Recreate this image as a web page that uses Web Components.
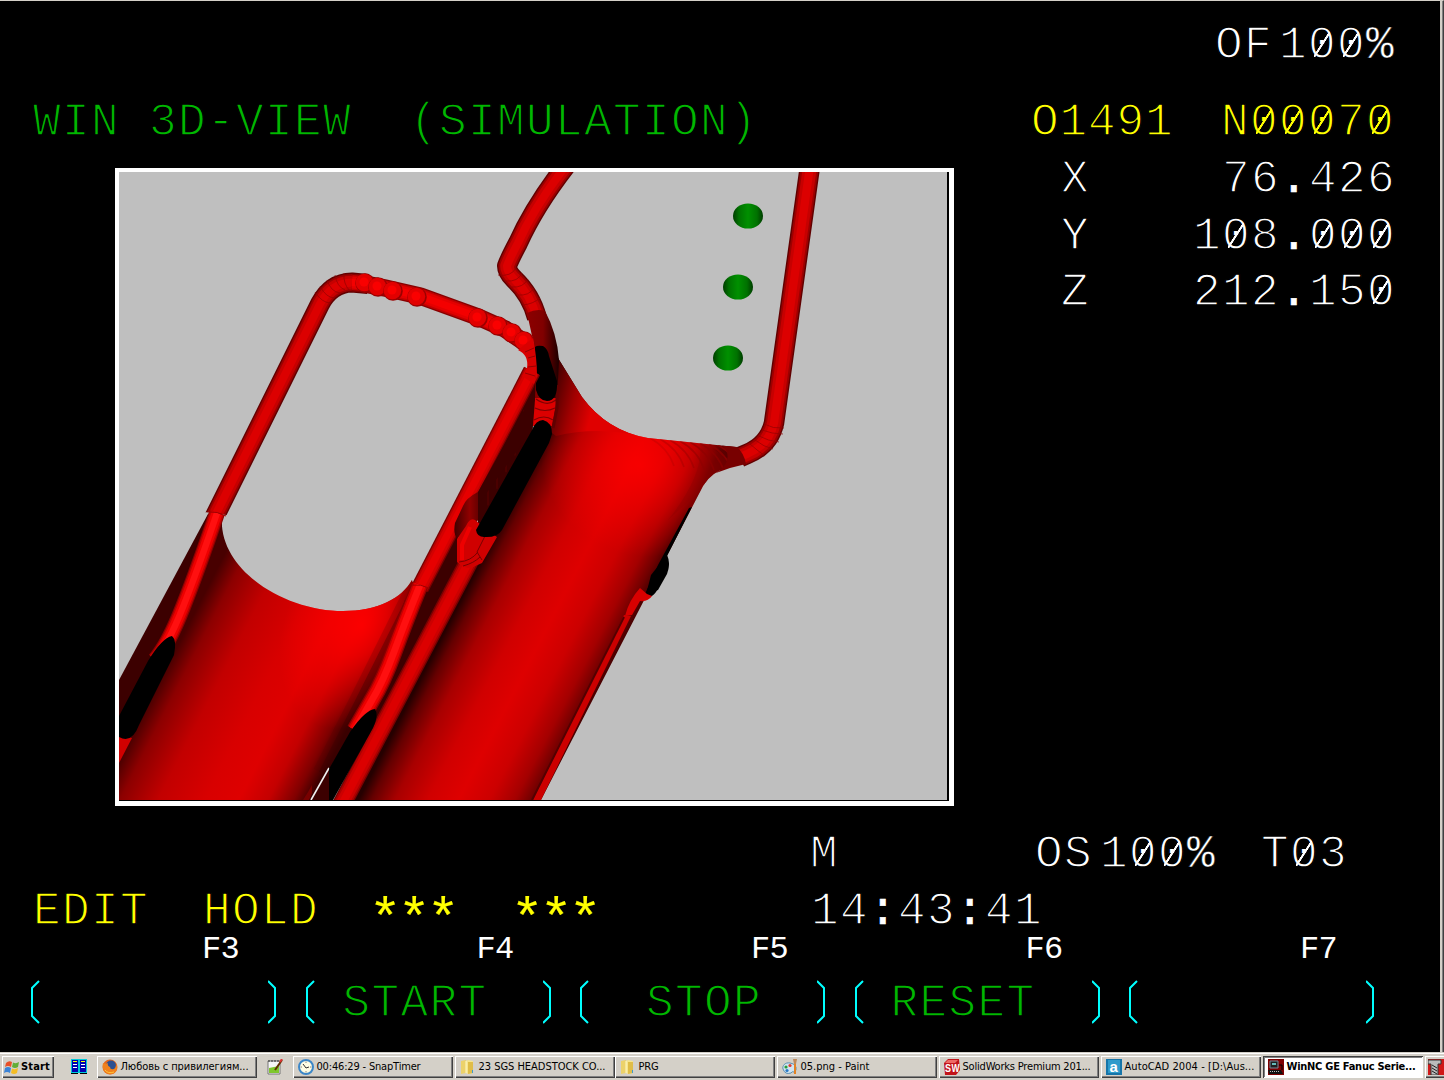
<!DOCTYPE html>
<html lang="en">
<head>
<meta charset="utf-8">
<title>WinNC GE Fanuc Series</title>
<style>
html,body{margin:0;width:1444px;height:1080px;overflow:hidden;background:#000}
</style>
</head>
<body>
<nc-desktop></nc-desktop>
<script>
const define=(name,html,setup)=>customElements.define(name,class extends HTMLElement{
  constructor(){super();this.attachShadow({mode:'open'});}
  connectedCallback(){
    this.shadowRoot.innerHTML=typeof html==='function'?html(this):html;
    if(setup)setup(this);
  }
});

/* One run of phosphor text on the 29px character grid; zeros carry a slash. */
define('crt-text',e=>`<style>
:host{display:block;flex:none;white-space:pre;font:46px/56px "Liberation Mono",monospace;letter-spacing:1.4px;color:#fff;-webkit-text-stroke:1.4px #000}
:host([c=g]){color:#00b800}:host([c=y]){color:#ff0}
:host([star]){transform:translate(-2px,9px);-webkit-text-stroke:.2px #ff0;font-size:54px;letter-spacing:-3.4px}
.z{position:relative}
.z::after{content:"";position:absolute;left:6px;top:12px;width:16px;height:25px;background:linear-gradient(to bottom right,transparent calc(50% - 1.3px),currentColor calc(50% - .8px),currentColor calc(50% + .8px),transparent calc(50% + 1.3px))}
.p{-webkit-text-stroke-width:.5px}
.d{-webkit-text-stroke:.6px currentColor}
</style>${(e.getAttribute('text')||'').replace(/0/g,'<span class="z">0</span>').replace('%','<span class="p">%</span>').replace(/[.:]/g,'<span class="d">$&</span>')}<slot></slot>`);

define('crt-row',`<style>:host{display:flex;height:56px;align-items:flex-start;box-sizing:border-box}</style><slot></slot>`);

/* Coordinate readout: axis name at left, value flush right. */
define('axis-row',e=>`<style>:host{display:flex;justify-content:space-between;height:56.5px;padding:0 47px 0 30px}</style>
<crt-text text="${e.getAttribute('axis')}"></crt-text><crt-text text="${e.getAttribute('value')}"></crt-text>`);

/* Soft key with its function number above and cyan parentheses around. */
define('soft-key',e=>`<style>
:host{display:flex;flex-direction:column;width:246px;flex:none}
.f{height:32px;box-sizing:border-box;padding:1px 0 0 171px;font:32px/32px "Liberation Mono",monospace;color:#fff;letter-spacing:-.6px}
.b{display:flex;align-items:flex-start;height:56px;padding-top:11px}
svg{flex:none;width:9px;height:44px;margin-top:4px}
path{fill:none;stroke:#0ff;stroke-width:2}
.m{flex:1;display:flex;padding-left:${e.getAttribute('pad')||0}px}
</style><div class="f">${e.getAttribute('key')}</div>
<div class="b"><svg viewBox="0 0 9 44"><path d="M8 1L1 8V36L8 43"/></svg><div class="m"><crt-text c="g"><slot></slot></crt-text></div><svg viewBox="0 0 9 44"><path d="M0 1L7 8V36L0 43"/></svg></div>`);

const tube=(d,w,c=['#600000','#9c0000','#c60000','#dc0000'],cap='butt')=>
  c.map((k,i)=>`<path d="${d}" fill="none" stroke="${k}" stroke-width="${(w*[1,.86,.68,.4][i]).toFixed(1)}" stroke-linejoin="round" stroke-linecap="${cap}"/>`).join('');
const bright=['#8a0000','#c40000','#ee0000','#ff1010'];
const rings=(list)=>list.map(([x1,y1,cx,cy,x2,y2])=>`<path d="M${x1} ${y1}Q${cx} ${cy} ${x2} ${y2}" fill="none" stroke="#900000" stroke-width=".7"/>`).join('');

define('machined-part',()=>`<style>:host{display:block;width:828px;height:628px;background:#bfbfbf}svg{display:block}</style>
<svg width="828" height="628" viewBox="119 172 828 628">
<defs>
<linearGradient id="r" gradientUnits="userSpaceOnUse" x1="455" y1="612" x2="599" y2="686"><stop offset="0" stop-color="#260000"/><stop offset=".07" stop-color="#640000"/><stop offset=".2" stop-color="#a80000"/><stop offset=".38" stop-color="#d00000"/><stop offset=".55" stop-color="#de0000"/><stop offset=".72" stop-color="#cc0000"/><stop offset=".86" stop-color="#a40000"/><stop offset=".95" stop-color="#700000"/><stop offset="1" stop-color="#4a0000"/></linearGradient>
<linearGradient id="l" gradientUnits="userSpaceOnUse" x1="155" y1="690" x2="323" y2="776"><stop offset="0" stop-color="#480000"/><stop offset=".1" stop-color="#8c0000"/><stop offset=".28" stop-color="#c20000"/><stop offset=".5" stop-color="#d80000"/><stop offset=".66" stop-color="#de0000"/><stop offset=".8" stop-color="#c40000"/><stop offset=".92" stop-color="#800000"/><stop offset="1" stop-color="#360000"/></linearGradient>
<radialGradient id="h1" gradientUnits="userSpaceOnUse" cx="0" cy="0" r="1" gradientTransform="translate(640 465) rotate(22) scale(100 90)"><stop offset="0" stop-color="#f00" stop-opacity=".8"/><stop offset="1" stop-color="#f00" stop-opacity="0"/></radialGradient>
<radialGradient id="h2" gradientUnits="userSpaceOnUse" cx="0" cy="0" r="1" gradientTransform="translate(362 625) rotate(-64) scale(110 75)"><stop offset="0" stop-color="#f00" stop-opacity=".95"/><stop offset=".3" stop-color="#f00" stop-opacity=".75"/><stop offset="1" stop-color="#f00" stop-opacity="0"/></radialGradient>
<linearGradient id="hk" gradientUnits="userSpaceOnUse" x1="552" y1="400" x2="592" y2="410"><stop offset="0" stop-color="#500000"/><stop offset=".5" stop-color="#a00000"/><stop offset="1" stop-color="#e00000"/></linearGradient>
<linearGradient id="w"><stop offset="0" stop-color="#8c0000"/><stop offset=".5" stop-color="#800000"/><stop offset="1" stop-color="#1c0000"/></linearGradient>
<linearGradient id="g"><stop offset="0" stop-color="#003c00"/><stop offset=".2" stop-color="#007200"/><stop offset=".5" stop-color="#009000"/><stop offset=".8" stop-color="#007200"/><stop offset="1" stop-color="#003c00"/></linearGradient>
<linearGradient id="n"><stop offset="0" stop-color="#400000"/><stop offset=".65" stop-color="#900000"/><stop offset="1" stop-color="#680000"/></linearGradient>
<clipPath id="cl"><path d="M222 515C217 570 285 611 343 611C378 611 402 598 412 580L420 620L318 800H119V740L200 560Z"/></clipPath>
<clipPath id="cr"><path d="M558 358L582 397Q607 431 648 438L736 447Q744 452 746 463L730 467Q712 471 703 486L541 800H340L480 560L545 440Z"/></clipPath>
<clipPath id="ct"><path d="M119 172H947V519L229 516Q218 511 200 512.500L119 512Z"/></clipPath>
</defs>
<path d="M208 514L119 680V745H170L222 580V510Z" fill="#3c0000"/>
<g clip-path="url(#cl)"><path d="M119 500H430V800H119Z" fill="url(#l)"/><path d="M220 520H440V800H220Z" fill="url(#h2)"/><path d="M424 585Q394 645 364 705L328 776" fill="none" stroke="#300000" stroke-width="20" opacity=".35"/><path d="M424 585Q394 645 364 705L328 776" fill="none" stroke="#500000" stroke-width="32" opacity=".22"/></g>
<path d="M458 535V568L400 680L380 725L360 760L362 720L405 600L440 545Z" fill="#3c0000"/>
<g clip-path="url(#cr)"><path d="M330 340H760V800H330Z" fill="url(#r)"/><path d="M530 350H760V580H530Z" fill="url(#h1)"/><path d="M558 352L582 394Q607 431 648 438Q600 425 556 436L548 430Z" fill="url(#hk)"/>
<path d="M700 444Q726 453 736 468L690 500L668 520Q704 475 700 444Z" fill="#8c0000" opacity=".35"/>
${[650,660,670,680,690,700,709,718].map((x,i)=>`<path d="M${x} ${438+i}Q${x+18} ${448+i} ${x+24} ${466+i}" stroke="#8c0000" fill="none" stroke-width="1.6" opacity="${.2+i*.1}"/>`).join('')}
<path d="M722 445L737 447L746 463L728 468Q735 458 722 445Z" fill="#800000"/></g>
<path d="M692 507L667 556Q669 562 668 569L656 592Q650 600 645 594L658 565L689 508Z" fill="#000"/>
<path d="M667 555Q671 563 667 574L658 590L646 595L651 575Z" fill="#000"/>
<path d="M640 588L647 594L652 596Q648 602 640 601L632 615L625 616Q629 600 640 588Z" fill="#d80000"/>
<path d="M624 615L631 616L541 800H533Z" fill="#cc0000"/><path d="M624 617L532 800" stroke="#540000" stroke-width="2" fill="none"/>
${tube('M476 548L341 806',19,['#780000','#ac0000','#cc0000','#dc0000'])}
${tube('M572 158Q536 203 518 243Q509 260 507 266Q507 272 514 279Q531 295 537 318',20)}
${rings([[498,275,511,277,516,268],[506,281,518,282,522,273],[512,287,523,288,528,279],[518,295,529,296,534,288],[523,305,533,304,540,298]])}
${tube('M810 166L774 423Q769 445 747 454L740 457',20.5,undefined)}
${rings([[764,424,773,429,784,428],[762,430,772,434,783,434],[759,436,768,441,779,442],[755,440,764,447,773,449],[750,444,758,451,765,456]])}
<path d="M724 446L737 447Q744 453 746 464L730 468L716 473Q734 462 724 446Z" fill="#780000"/>
<path d="M527 313Q537 308 545 311Q557 333 559 360L557 400L534 402V345Z" fill="url(#w)"/>
<path d="M534 398L557 398L552 426H531Z" fill="#dc0000"/><path d="M536 399Q547 407 556 400M535 408Q545 413 555 408M534 420Q544 414 553 420" fill="none" stroke="#800000" stroke-width="1.2"/><path d="M557 385V408L553 428" fill="none" stroke="#600000" stroke-width="3"/>
<path d="M535 347Q537 345 543 346Q548 349 549 356L557 381Q558 401 547 401Q539 401 536 390Z"/>
<path d="M536 365L478 490V531L532 438L535 400Z" fill="#3c0000"/>
${[488,497,506,515,524].map(x=>`<path d="M${x} ${482-(x-485)*1.85}V${511-(x-485)*1.85}" stroke="#580000" stroke-width="1"/>`).join('')}
<g clip-path="url(#ct)">${tube('M211 524L320 304Q331 283 352 282.5L368 284',20)}</g>
${tube('M352 282.5Q362 283 385 288L420 296L478 317L505 329L524 342',17.5,['#860000','#c40000','#e40000','#f40000'])}
${[[365,283],[378,287],[393,291],[417,297],[478,318],[498,326],[512,333],[524,341]].map(([x,y])=>`<circle cx="${x}" cy="${y}" r="9.8" fill="#9c0000"/><circle cx="${x-.6}" cy="${y-.5}" r="8.8" fill="#e20000"/><circle cx="${x-1}" cy="${y-1}" r="4.5" fill="#fa0000"/>`).join('')}
${rings([[315,292,322,303,331,303],[320,286,326,298,335,298],[327,280,331,292,340,293],[335,275,337,287,345,290],[344,273,343,284,350,291]])}
${tube('M532 371L420 588',18,['#780000','#b80000','#d40000','#e60000'])}
<path d="M518 350Q529 355 527 368L522 376L534 384L537 376Q537 358 533 338Z" fill="#d80000"/><path d="M525 352L534 348M528 358L535 356M528 367L536 366M525 373L535 376" stroke="#800000" stroke-width=".8" fill="none"/>
<path d="M478 492Q466 498 463 506L455 523Q453 534 457 538L469 535L478 520Z" fill="url(#n)"/>
<path d="M536 372Q536 395 519 418L478 492V505L532 430Z" fill="#3c0000"/>
<path d="M475 520Q470 517 466 526L457 539V562Q463 568 471 568L482 563L497 537L490 532Z" fill="#d00000"/><path d="M470 527L462 545V560" fill="none" stroke="#ee0000" stroke-width="4"/><path d="M459 562Q471 561 478 552M463 566Q474 563 480 557M485 536L477 552L482 560" fill="none" stroke="#780000"/>
<path d="M543 420Q552 422 552 434L549 443L502 530Q497 538 484 537Q477 537 476 530L532 430Q536 420 543 420Z"/>
${tube('M420 585Q405 622 394 652T372 700L355 730',17,bright)}
${tube('M217 513Q198 569 183 607T155 660',16,bright)}
<path d="M209 512Q217 511 226 516M411 585Q421 584 429 588" stroke="#a00000" fill="none"/>
<path d="M119 735L132 738L119 763Z" fill="#d00000"/>
<path d="M172 636Q177 640 174 655L139 725Q132 744 119 737V716L148 661Q162 638 172 636Z"/>
<path d="M330 769V800H310Z" fill="#3c0000"/><path d="M329 768L311 800" stroke="#f0f0f0" stroke-width="1.6"/><path d="M308 792L312 785V793L309 800H303Z" fill="#780000"/>
<path d="M375 709Q379 715 373 728L333 800H329V769L350 732Q365 710 375 709Z"/>
${[[748,216],[738,287],[728,358]].map(([x,y])=>`<ellipse cx="${x}" cy="${y}" rx="15" ry="12.6" fill="url(#g)"/>`).join('')}
</svg>`);

define('view-frame',`<style>:host{display:block;box-sizing:border-box;width:839px;height:638px;border:4px solid #fff;border-width:4px 5px 5px 4px;background:#000;flex:none}</style><slot></slot>`);

define('nc-screen',`<style>
:host{display:flex;flex-direction:column;box-sizing:border-box;width:1444px;height:1052px;border-top:1px solid #d4d0c8;border-right:1px solid #404040;box-shadow:inset -1px 0 #808080,inset -3px 0 #d4d0c8;overflow:hidden}
.main{display:flex;height:675px}
.view{padding:16px 77px 0 115px}
.axes{flex:1}
.keys{display:flex;gap:28.5px;padding:0 0 0 31px}
</style>
<crt-row style="padding-left:1215px;height:76px;padding-top:17px"><crt-text text="OF"></crt-text><crt-text style="margin-left:6px" text="100%"></crt-text></crt-row>
<crt-row style="padding-left:33px;margin-top:18px;height:57px"><crt-text c="g" style="width:998px" text="WIN 3D-VIEW  (SIMULATION)"></crt-text><crt-text c="y" style="width:190px;letter-spacing:.9px" text="O1491"></crt-text><crt-text c="y" text="N00070"></crt-text></crt-row>
<div class="main"><div class="view"><view-frame><machined-part></machined-part></view-frame></div>
<div class="axes"><axis-row axis="X" value="76.426"></axis-row><axis-row axis="Y" value="108.000"></axis-row><axis-row axis="Z" value="212.150"></axis-row></div></div>
<crt-row style="height:57px;padding-left:810px"><crt-text style="width:225px" text="M"></crt-text><crt-text style="width:65px" text="OS"></crt-text><crt-text style="width:161px" text="100%"></crt-text><crt-text text="T03"></crt-text></crt-row>
<crt-row style="height:49px;padding-left:33px"><crt-text c="y" style="width:170px" text="EDIT"></crt-text><crt-text c="y" style="width:168px" text="HOLD"></crt-text><crt-text c="y" star style="width:142px" text="***"></crt-text><crt-text c="y" star style="width:298px" text="***"></crt-text><crt-text text="14:43:41"></crt-text></crt-row>
<div class="keys"><soft-key key="F3"></soft-key><soft-key key="F4" pad="28">START</soft-key><soft-key key="F5" pad="57">STOP</soft-key><soft-key key="F6" pad="27">RESET</soft-key><soft-key key="F7"></soft-key></div>`);

const icons={
start:`<path d="M2 4Q5 1 8 3L7 8Q4 6 1 8Z" fill="#e85028"/><path d="M9 3.5Q12 5 15 3L14 8Q11 10 8 8Z" fill="#62ad35"/><path d="M1 9Q4 7 7 9L6 14Q3 12 0 14Z" fill="#3b83d6"/><path d="M8 9.5Q11 11 14 9L13 14Q10 16 7 14Z" fill="#f4bd24"/>`,
book:`<path d="M0 0H16V14H0Z" fill="#00c8d8"/><path d="M1 1H7V13H1ZM9 1H15V13H9Z" fill="#0000b0"/><path d="M2 2.5H6M10 2.5H14" stroke="#ff0"/><path d="M2 5.5H6M10 5.5H14M2 8.5H6M10 8.5H14" stroke="#fff"/><path d="M0 14.5H7M9 14.5H16" stroke="#000"/>`,
fox:`<circle cx="8" cy="8" r="7.5" fill="#e4661c"/><circle cx="9" cy="6.5" r="5" fill="#2c4f91"/><path d="M1 4Q4 5 6 4Q5 7 8 8Q8 11 12 10Q14 9 14 5Q17 11 12 14.5Q6 17 2 12Q0 9 1 4Z" fill="#f0811d"/><path d="M3 11Q6 15 12 13" stroke="#ffc43a" fill="none"/>`,
note:`<path d="M1 2H13V15H1Z" fill="#f6f6f6" stroke="#777"/><path d="M2 9L12 7V14H2Z" fill="#7fc72c"/><path d="M2 1V3M5 1V3M8 1V3M11 1V3" stroke="#333"/><path d="M15 1L8 11" stroke="#603000" stroke-width="2"/><path d="M15 0L13 3" stroke="#d33" stroke-width="2"/>`,
clock:`<circle cx="8" cy="8" r="7" fill="#fffde4" stroke="#3c87c8" stroke-width="2"/><path d="M8 9L5 5M8 9L11 8" stroke="#333"/><path d="M8 2.5V4M8 12V13.5M2.5 8H4M12 8H13.5" stroke="#888"/>`,
folder:`<path d="M1 2L6 1V14L1 15Z" fill="#ecd26a"/><path d="M6 2L8 1L13 2V14L8 15L6 14Z" fill="#f5e48e"/><path d="M8 3V15L13 14V3Z" fill="#e0bd48"/><path d="M6 2V14" stroke="#fff7c4"/><path d="M12.5 11V14" stroke="#3c9bd0"/>`,
paint:`<path d="M8 4C3 3 0 7 1 10Q3 16 9 14Q10 12 12 13Q15 12 14 8Q12 4 8 4Z" fill="#d0e4f0" stroke="#5b8fb0"/><circle cx="4" cy="8" r="1.6" fill="#2a9b3c"/><circle cx="8" cy="6.5" r="1.6" fill="#e23b2e"/><circle cx="5" cy="11.5" r="1.6" fill="#2779c6"/><path d="M13 5V15" stroke="#e38223" stroke-width="2"/><path d="M11 0H15L14 5H12Z" fill="#c08a5a"/>`,
sw:`<path d="M0 4L4 0H15L16 11L12 16H1Z" fill="#c2141a"/><path d="M1 4L4 1H14L11 4Z" fill="#ee6a66"/><text x="1" y="13" font-family="Liberation Sans" font-weight="700" font-size="10" textLength="6" lengthAdjust="spacingAndGlyphs" fill="#fff">S</text><text x="7.5" y="13" font-family="Liberation Sans" font-weight="700" font-size="10" textLength="8" lengthAdjust="spacingAndGlyphs" fill="#fff">W</text>`,
acad:`<path d="M0 0H16V16H0Z" fill="#1675a9"/><path d="M2 1H14V14H2Z" fill="#2e9bcb"/><text x="3.5" y="12.5" font-family="Liberation Sans" font-weight="700" font-size="15" fill="#fff">a</text>`,
nc:`<path d="M0 0H16V16H0Z" fill="#7d0000"/><path d="M2 2H10V9H2Z" fill="#202020" stroke="#789"/><path d="M4 4H8V6H4Z" fill="#6bb"/><path d="M0 11H13L15 15H1Z" fill="#111"/><path d="M2 12.5H11" stroke="#bbb" stroke-dasharray="1 1"/><path d="M11 6H14V11" stroke="#000" fill="none"/>`,
mill:`<path d="M0 0H16V16H0Z" fill="#d01818"/><path d="M0 1H13V5H10V16H3V5H0Z" fill="#bbb" stroke="#333"/><path d="M4 6L9 9M4 9L9 12M4 12L9 15" stroke="#222"/>`
};
define('task-icon',e=>`<style>:host{display:block;flex:none;width:16px;height:16px}svg{display:block}</style><svg width="16" height="16" viewBox="0 0 16 16">${icons[e.getAttribute('name')]}</svg>`);

/* Taskbar button; the label is tracked so that it fills its fitted width. */
define('task-button',e=>`<style>
:host{display:flex;align-items:center;gap:${e.getAttribute('gap')||2.5}px;box-sizing:border-box;flex:none;width:160px;height:22px;padding-left:5px;margin-right:2px;background:#d4d0c8;box-shadow:inset 1px 1px #fff,inset -1px -1px #404040,inset -2px -2px #808080;font:11px/14px "DejaVu Sans Condensed","DejaVu Sans",sans-serif;color:#000;overflow:hidden}
:host([active]){background:#fff;box-shadow:inset 1px 1px #404040,inset -1px -1px #fff,inset 2px 2px #808080;font-weight:700}
:host([bold]){font-weight:700}
span{white-space:pre}
</style><task-icon name="${e.getAttribute('icon')}"></task-icon><span>${e.getAttribute('label')||''}</span>`,e=>{
  const s=e.shadowRoot.querySelector('span'),w=+e.getAttribute('fit');
  if(w)s.style.letterSpacing=((w-s.getBoundingClientRect().width)/s.textContent.length)+'px';
});

define('task-bar',`<style>:host{display:flex;align-items:flex-start;box-sizing:border-box;height:28px;padding:4px 0 0 2px;background:#d4d0c8;box-shadow:inset 0 1px #d4d0c8,inset 0 2px #fff;overflow:hidden}
task-icon{margin-top:3px}</style>
<task-button icon="start" label="Start" bold gap="1" fit="29" style="width:52px;padding-left:2px;margin-right:17px"></task-button>
<task-icon name="book" style="margin-right:10px"></task-icon>
<task-button icon="fox" label="Любовь с привилегиям..." fit="128" style="margin-right:10px"></task-button>
<task-icon name="note" style="margin-right:10px"></task-icon>
<task-button icon="clock" label="00:46:29 - SnapTimer" fit="104"></task-button>
<task-button icon="folder" label="23 SGS HEADSTOCK CO..." fit="127" style="margin-right:0"></task-button>
<task-button icon="folder" label="PRG" fit="20"></task-button>
<task-button icon="paint" label="05.png - Paint" fit="69"></task-button>
<task-button icon="sw" label="SolidWorks Premium 201..." fit="128"></task-button>
<task-button icon="acad" label="AutoCAD 2004 - [D:\\Aus..." fit="130"></task-button>
<task-button icon="nc" label="WinNC GE Fanuc Serie..." active fit="129"></task-button>
<task-button icon="mill" style="width:40px;padding-left:3px"></task-button>`);

define('nc-desktop',`<style>:host{display:flex;flex-direction:column;width:1444px;height:1080px;background:#000}</style><nc-screen></nc-screen><task-bar></task-bar>`);
</script>
</body>
</html>
